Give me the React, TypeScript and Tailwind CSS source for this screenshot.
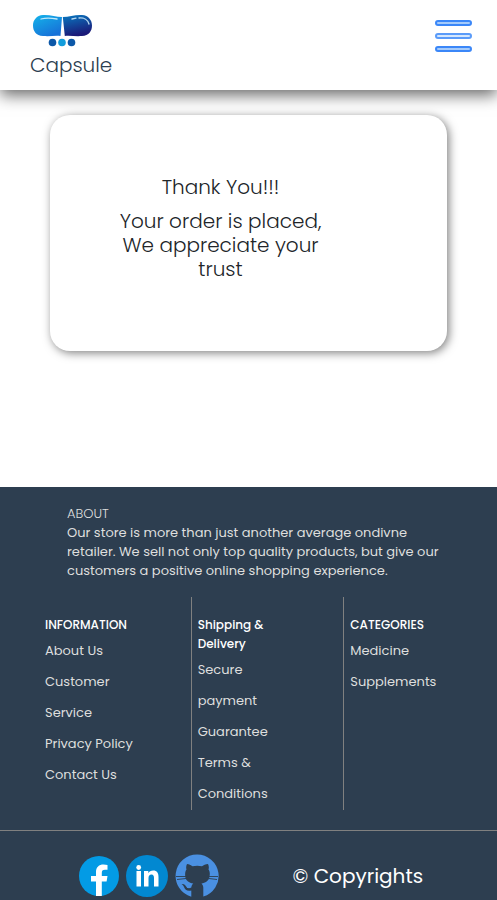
import React from "react";

type LinkColumn = { title: string; links: string[] };

const columns: LinkColumn[] = [
  { title: "INFORMATION", links: ["About Us", "Customer Service", "Privacy Policy", "Contact Us"] },
  { title: "Shipping & Delivery", links: ["Secure payment", "Guarantee", "Terms & Conditions"] },
  { title: "CATEGORIES", links: ["Medicine", "Supplements"] },
];

function CapsuleLogo() {
  return (
    <svg className="block h-9 w-16" viewBox="0 0 64 36" aria-hidden="true">
      <defs>
        <linearGradient id="capsuleLeft" x1="0" y1="0" x2="0.6" y2="1">
          <stop offset="0" stopColor="#14b4ea" />
          <stop offset="1" stopColor="#1772d8" />
        </linearGradient>
        <linearGradient id="capsuleRight" x1="0" y1="0" x2="0.3" y2="1">
          <stop offset="0" stopColor="#0878c0" />
          <stop offset="1" stopColor="#1b1a78" />
        </linearGradient>
      </defs>
      <path d="M13 3C20 2.600 26 5 32 5L30.500 24C25 23.500 20 24.500 13 24C6 23.500 3 19 3 13.500C3 8 6.500 3.500 13 3Z" fill="url(#capsuleLeft)" />
      <path d="M32.800 5C39 5 45 2.600 52 3C58.500 3.500 62 8 62 13.500C62 19 59 23.500 52 24C46 24.500 40 23.500 34.800 24Z" fill="url(#capsuleRight)" />
      <path d="M11 7C17 5.200 22 6 27 7" fill="none" stroke="#bfe8fa" strokeWidth="1.300" strokeLinecap="round" />
      <path d="M42 7L46 6.200M49 6C54 5.500 58 8 59 12" fill="none" stroke="#b5d8ef" strokeWidth="1.300" strokeLinecap="round" />
      <circle cx="22.500" cy="30.500" r="3.800" fill="#0c58a8" />
      <circle cx="32" cy="30.500" r="3.800" fill="#129ddc" />
      <circle cx="41.500" cy="30.500" r="3.800" fill="#0c58a8" />
    </svg>
  );
}

function Header() {
  return (
    <header className="relative z-10 flex h-[90px] items-start justify-between bg-white pt-3 pr-[25px] pl-[30px] shadow-[0_5px_15px_rgba(0,0,0,0.6)]">
      <a href="#home" className="block text-[#2d3e50]">
        <CapsuleLogo />
        <span className="mt-1 block text-xl leading-[26px] font-light">Capsule</span>
      </a>
      <button type="button" aria-label="Open menu" className="mt-2 flex w-[37px] flex-col gap-[7px]">
        <span className="h-[6px] w-full rounded-[3px] border-2 border-[#3b87f8] bg-[#a5cbfb]" />
        <span className="h-[6px] w-full rounded-[3px] border-2 border-[#5a9bf9] bg-[#d5e7fd]" />
        <span className="h-[6px] w-full rounded-[3px] border-2 border-[#3b87f8] bg-[#a5cbfb]" />
      </button>
    </header>
  );
}

function FacebookIcon() {
  return (
    <svg className="block size-10" viewBox="0 0 40 40" aria-hidden="true">
      <circle cx="20" cy="20" r="20" fill="#039be5" />
      <path d="M17 40V25.500H12V20H17V16C17 11 20 8.500 24.500 8.500C26 8.500 27.500 8.700 28.500 9V13.800H26C23.500 13.800 22.800 14.800 22.800 17V20H28.500L27.600 25.500H22.800V40Z" fill="#fff" />
    </svg>
  );
}

function LinkedInIcon() {
  return (
    <svg className="block size-[42px]" viewBox="0 0 42 42" aria-hidden="true">
      <circle cx="21" cy="21" r="21" fill="#0288d1" />
      <path d="M10.500 16H15V31.500H10.500ZM18 16H22.300V18.200C23.200 16.700 24.800 15.600 27.200 15.600C31 15.600 32.500 18.200 32.500 22V31.500H28V23C28 20.800 27.300 19.500 25.500 19.500C23.500 19.500 22.500 21 22.500 23V31.500H18Z" fill="#fff" />
      <circle cx="12.700" cy="12.500" r="2.400" fill="#fff" />
    </svg>
  );
}

function GitHubIcon() {
  return (
    <svg className="block size-11" viewBox="0 0 44 44" aria-hidden="true">
      <path d="M22 0.500A21.500 21.500 0 0 1 28.300 42.600V34C28.300 32.500 28 31 26.500 29.500C30 29 34 27 34.500 22.500C35 20 35 17.500 33.500 15.500C34 14 34 12 33 10C30.500 10 28.500 11.200 27 12.300C24 11.500 20.500 11.500 17.500 12.300C16 11.200 14 10 12 10C11 12 11 14 11.500 15.500C10 17.500 10 20 10.300 22.500C10.500 26.500 14 29 18.300 29.500C17.300 30.300 16.500 31.500 16.300 33.500C14.500 34.500 12.500 34.500 11.500 33C10.500 31.500 9.500 29.500 6.500 30C7.500 30.500 8.500 31.500 9 33C10 35.500 12 37.500 16.300 36.500V42.700A21.500 21.500 0 0 1 22 0.500Z" fill="#4a90e2" />
      <path d="M1 22.500H11M2 25.500L11 24.500M34 22.500H43M34 24.500L42 25.500" stroke="#2d3e50" strokeWidth="0.900" />
    </svg>
  );
}

function Footer() {
  return (
    <footer className="bg-[#2d3e50] pt-[17px] text-[13px] text-[#dedede]">
      <section className="pr-[52px] pl-[67px]">
        <h6 className="leading-[19px] font-light">ABOUT</h6>
        <p className="leading-[19px]">
          Our store is more than just another average ondivne retailer. We sell not only top quality products, but give our
          customers a positive online shopping experience.
        </p>
      </section>
      <div className="mt-[17px] grid grid-cols-3 pl-[39px]">
        {columns.map((column, index) => (
          <nav
            key={column.title}
            aria-label={column.title}
            className={`min-h-[213px] pt-[18px] pl-[6px] ${index < columns.length - 1 ? "border-r border-[#808080]" : ""}`}
          >
            <h6 className="max-w-24 text-xs leading-[19px] font-medium text-white">{column.title}</h6>
            <ul className="mt-px max-w-24 leading-[31px]">
              {column.links.map((link) => (
                <li key={link}>
                  <a href="#links">{link}</a>
                </li>
              ))}
            </ul>
          </nav>
        ))}
      </div>
      <div className="mt-5 grid grid-cols-2 items-center border-t border-[#808080] pt-[23px] pb-[2px]">
        <div className="flex items-center justify-end gap-[7px] pr-[30px]">
          <a href="#facebook" aria-label="Facebook"><FacebookIcon /></a>
          <a href="#linkedin" aria-label="LinkedIn"><LinkedInIcon /></a>
          <a href="#github" aria-label="GitHub"><GitHubIcon /></a>
        </div>
        <p className="pl-11 text-xl text-white">© Copyrights</p>
      </div>
    </footer>
  );
}

export default function App() {
  return (
    <div className="flex min-h-screen flex-col bg-white font-['Poppins','Inter',sans-serif]">
      <Header />
      <main className="flex-1 px-[50px] pt-[25px] pb-[136px]">
        <section className="min-h-[236px] rounded-[20px] bg-white pt-[60px] pr-[112px] pl-[56px] text-center text-xl leading-6 font-light text-[#212529] shadow-[2px_2px_10px_rgba(0,0,0,0.5)]">
          <h1 className="font-light">Thank You!!!</h1>
          <h2 className="mt-[10px] font-light">Your order is placed, We appreciate your trust</h2>
        </section>
      </main>
      <Footer />
    </div>
  );
}
